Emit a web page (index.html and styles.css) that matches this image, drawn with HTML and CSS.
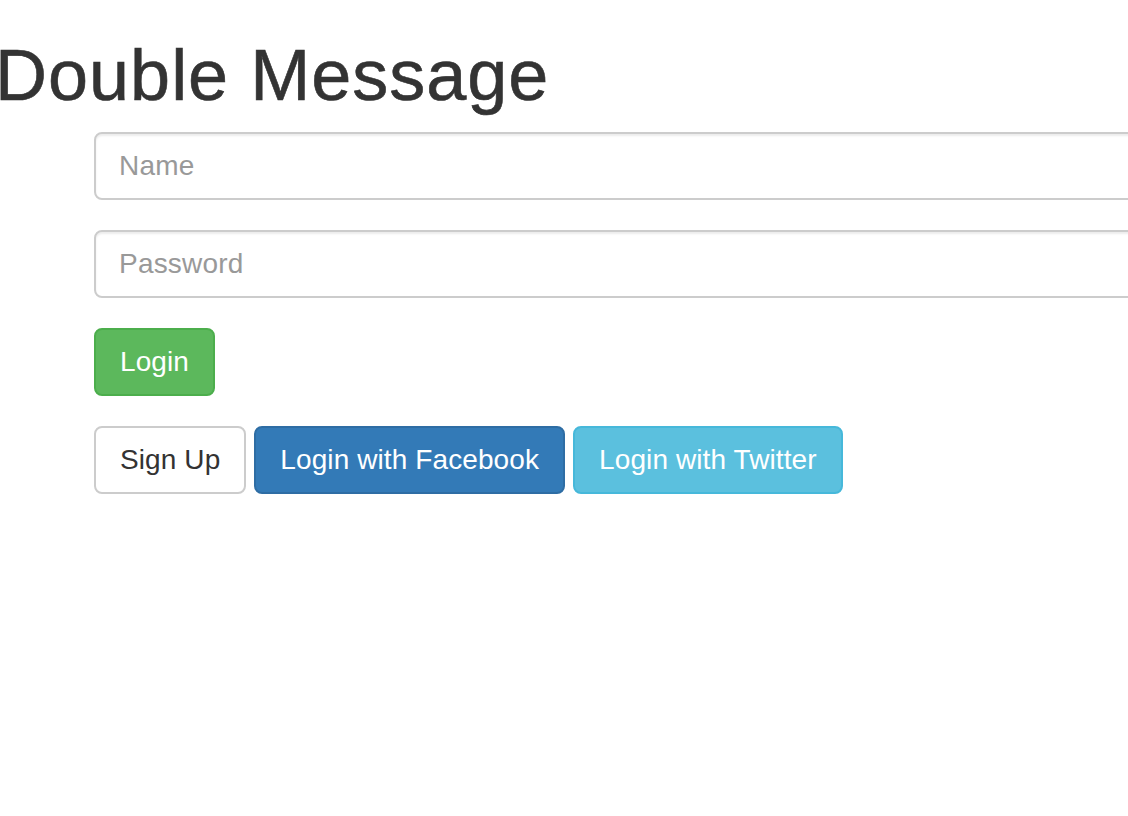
FILE: index.html
```html
<!DOCTYPE html>
<html lang="en">
<head>
<meta charset="utf-8">
<title>Double Message</title>
<link rel="stylesheet" href="styles.css">
</head>
<body>
<div class="page">
  <h1 class="title">Double Message</h1>
  <form class="login-form">
    <div class="form-group">
      <input class="form-control" type="text" placeholder="Name">
    </div>
    <div class="form-group">
      <input class="form-control" type="password" placeholder="Password">
    </div>
    <div class="form-group">
      <button type="button" class="btn btn-success">Login</button>
    </div>
    <div class="btn-row">
      <button type="button" class="btn btn-default">Sign Up</button>
      <button type="button" class="btn btn-primary">Login with Facebook</button>
      <button type="button" class="btn btn-info">Login with Twitter</button>
    </div>
  </form>
</div>
</body>
</html>
```

FILE: styles.css
```css
html, body {
  margin: 0;
  padding: 0;
  background: #fff;
  overflow: hidden;
}
body {
  font-family: "Liberation Sans", Arial, Helvetica, sans-serif;
  font-size: 28px;
  line-height: 1.428571;
  color: #333;
}
.page {
  width: 1300px;
}
.title {
  font-family: "Liberation Sans", Arial, Helvetica, sans-serif;
  font-weight: 400;
  font-size: 72px;
  line-height: 1.1;
  letter-spacing: 1px;
  color: #333;
  -webkit-text-stroke: 0.6px #333;
  margin: 36px 0 17px -5px;
}
.login-form {
  padding-left: 94px;
}
.form-group {
  margin-bottom: 30px;
}
.form-control {
  display: block;
  box-sizing: border-box;
  width: 1120px;
  height: 68px;
  padding: 12px 24px 12px 23px;
  font-family: inherit;
  font-size: 28px;
  line-height: 1.428571;
  letter-spacing: 0.2px;
  color: #555;
  background: #fff;
  border: 2px solid #ccc;
  border-radius: 8px;
  box-shadow: inset 0 2px 2px rgba(0, 0, 0, 0.075);
  outline: none;
}
.form-control::placeholder {
  color: #999;
  opacity: 1;
}
.btn-row {
  display: flex;
  gap: 8px;
}
.btn {
  display: inline-block;
  box-sizing: border-box;
  height: 68px;
  padding: 12px 24px;
  font-family: inherit;
  font-size: 28px;
  line-height: 1.428571;
  letter-spacing: 0.1px;
  font-weight: 400;
  border: 2px solid transparent;
  border-radius: 8px;
  cursor: pointer;
  white-space: nowrap;
}
.btn-success {
  color: #fff;
  background: #5cb85c;
  border-color: #4cae4c;
}
.btn-default {
  color: #333;
  background: #fff;
  border-color: #ccc;
}
.btn-primary {
  color: #fff;
  background: #337ab7;
  border-color: #2e6da4;
}
.btn-info {
  color: #fff;
  background: #5bc0de;
  border-color: #46b8da;
}
```
